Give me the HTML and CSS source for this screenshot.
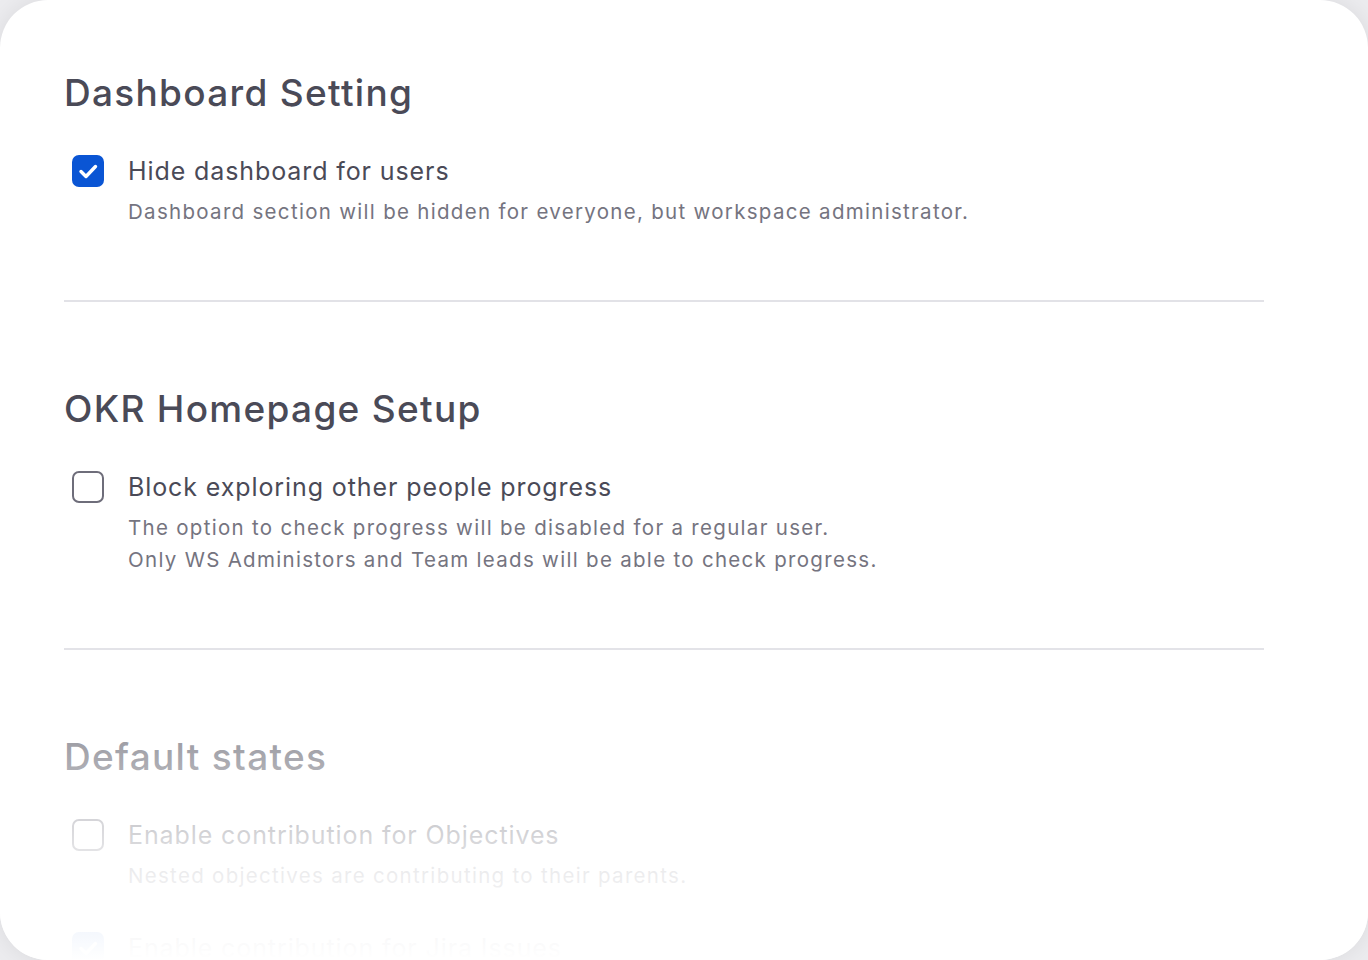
FILE: index.html
```html
<!DOCTYPE html>
<html lang="en">
<head>
    <meta charset="utf-8" />
    <title>Workspace settings</title>
    <link rel="stylesheet" href="styles.css">
</head>
<body>
<div class="card">
    <div class="section">
        <h2 class="title">Dashboard Setting</h2>
        <div class="option">
            <span class="box on">
                <svg viewBox="0 0 32 32" width="32" height="32"><polyline points="9,16.5 14,21.5 23.5,11.5" fill="none" stroke="#fff" stroke-width="3.4" stroke-linecap="round" stroke-linejoin="round"/></svg>
            </span>
            <div class="text">
                <div class="label">Hide dashboard for users</div>
                <p class="desc">Dashboard section will be hidden for everyone, but workspace administrator.</p>
            </div>
        </div>
    </div>

    <div class="section">
        <h2 class="title">OKR Homepage Setup</h2>
        <div class="option">
            <span class="box"></span>
            <div class="text">
                <div class="label">Block exploring other people progress</div>
                <p class="desc">The option to check progress will be disabled for a regular user.<br>Only WS Administors and Team leads will be able to check progress.</p>
            </div>
        </div>
    </div>

    <div class="section last">
        <h2 class="title">Default states</h2>
        <div class="option">
            <span class="box"></span>
            <div class="text">
                <div class="label">Enable contribution for Objectives</div>
                <p class="desc">Nested objectives are contributing to their parents.</p>
            </div>
        </div>
        <div class="option">
            <span class="box on">
                <svg viewBox="0 0 32 32" width="32" height="32"><polyline points="9,16.5 14,21.5 23.5,11.5" fill="none" stroke="#fff" stroke-width="3.4" stroke-linecap="round" stroke-linejoin="round"/></svg>
            </span>
            <div class="text">
                <div class="label">Enable contribution for Jira Issues</div>
                <p class="desc">Linked Jira issues are contributing to their objectives.</p>
            </div>
        </div>
    </div>

    <div class="fade"></div>
</div>
</body>
</html>
```

FILE: styles.css
```css
* {
    margin: 0;
    padding: 0;
    box-sizing: border-box;
}

html, body {
    height: 100%;
}

body {
    background: #ececef;
    font-family: "Inter", "Noto Sans", sans-serif;
    overflow: hidden;
}

.card {
    position: relative;
    height: 960px;
    padding: 69px 104px 0 64px;
    background: #fff;
    border-radius: 48px;
    box-shadow: 0 0 24px rgba(0, 0, 0, .08);
    overflow: hidden;
}

.section {
    padding-bottom: 72px;
    margin-bottom: 83px;
    border-bottom: 2px solid #e2e2e7;
}

.section.last {
    border-bottom: none;
}

.title {
    font-size: 37px;
    font-weight: 500;
    line-height: 48px;
    color: #4a4a57;
    letter-spacing: 1.3px;
}

.option {
    display: flex;
    gap: 24px;
    margin-top: 38px;
    padding-left: 8px;
}

.option + .option {
    margin-top: 40px;
}

.box {
    flex: none;
    width: 32px;
    height: 32px;
    border: 2.6px solid #6e6d7a;
    border-radius: 7px;
}

.box.on {
    border: none;
    background: #0a55d4;
}

.box svg {
    display: block;
}

.label {
    font-size: 25px;
    line-height: 32px;
    color: #4a4a57;
    letter-spacing: 0.9px;
}

.desc {
    margin-top: 9px;
    font-size: 20.5px;
    line-height: 32px;
    color: #75747f;
    letter-spacing: 1.3px;
}

.fade {
    position: absolute;
    left: 0;
    right: 0;
    bottom: 0;
    height: 320px;
    background: linear-gradient(to bottom, rgba(255, 255, 255, 0) 0%, rgba(255, 255, 255, .45) 30%, rgba(255, 255, 255, .85) 70%, #fff 100%);
    pointer-events: none;
}
```
